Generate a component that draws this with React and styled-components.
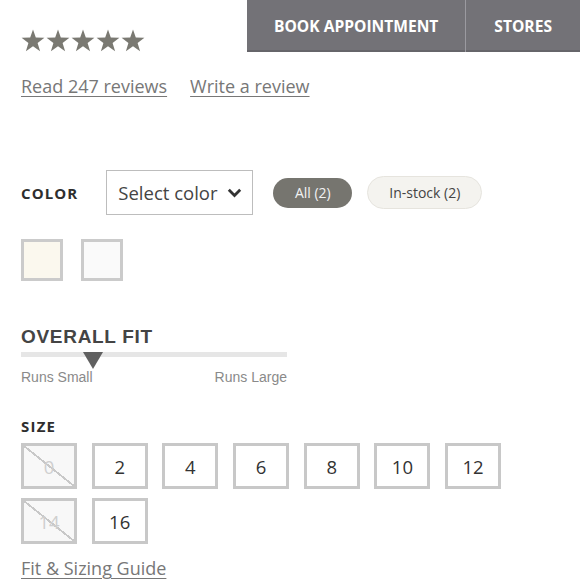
import styled, { createGlobalStyle } from 'styled-components'

const Global = createGlobalStyle`
   body {
      margin: 0;
      background: #fff;
      font-family: "Open Sans", "Liberation Sans", sans-serif;
      color: #333;
   }
`

const Page = styled.div`
   width: 580px;
   height: 580px;
   overflow: hidden;
`

const TopRow = styled.div`
   display: flex;
   justify-content: space-between;
   height: 52px;
`

const Stars = styled.div`
   display: flex;
   gap: 1px;
   padding: 29px 0 0 21px;
   svg {
      width: 24px;
      height: 23px;
      fill: #7a7972;
   }
`

const ActionBar = styled.div`
   display: flex;
   width: 333px;
   height: 52px;
   background: #737277;
   box-shadow: inset 0 -2px 0 #66656a;
`

const ActionButton = styled.div`
   display: flex;
   align-items: center;
   justify-content: center;
   width: ${p => p.$w}px;
   color: #fff;
   font-size: 15.6px;
   font-weight: 700;
   padding-bottom: 1px;
   & + & {
      border-left: 1px solid #9b9aa0;
   }
`

const Body = styled.div`
   padding: 0 21px;
`

const Links = styled.div`
   display: flex;
   gap: 23px;
   margin-top: 22px;
`

const TextLink = styled.a`
   font-size: 18px;
   line-height: 24px;
   color: #777;
   text-decoration: underline;
   text-underline-offset: 3px;
   text-decoration-thickness: 1px;
`

const ColorRow = styled.div`
   display: flex;
   align-items: center;
   margin-top: 72px;
`

const Label = styled.div`
   font-size: 15px;
   font-weight: 700;
   letter-spacing: ${p => p.$ls || 1.1}px;
   color: #2e2e2e;
`

const Select = styled.div`
   display: flex;
   align-items: center;
   gap: 9px;
   box-sizing: border-box;
   width: 147px;
   height: 45px;
   margin-left: 28px;
   padding-left: 11px;
   border: 1.5px solid #bdbdbd;
   font-size: 18.5px;
   color: #444;
   svg {
      width: 15px;
      height: 10px;
      margin-top: 1px;
   }
`

const Pill = styled.div`
   display: flex;
   align-items: center;
   justify-content: center;
   box-sizing: border-box;
   width: ${p => p.$w}px;
   height: ${p => (p.$active ? 30 : 33)}px;
   margin-left: ${p => p.$ml}px;
   border-radius: 17px;
   font-size: 14px;
   background: ${p => (p.$active ? '#76756f' : '#f4f3ef')};
   color: ${p => (p.$active ? '#f2f2f2' : '#444')};
   border: ${p => (p.$active ? 'none' : '1px solid #e6e4de')};
`

const Swatches = styled.div`
   display: flex;
   gap: 18px;
   margin-top: 24px;
`

const Swatch = styled.div`
   box-sizing: border-box;
   width: 42px;
   height: 42px;
   border: 3px solid #cbcbcb;
   background: ${p => p.$color};
`

const FitTitle = styled.div`
   margin-top: 46px;
   font-family: "Liberation Sans", Arial, sans-serif;
   font-size: 19px;
   line-height: 20px;
   font-weight: 700;
   letter-spacing: 0.7px;
   color: #444;
`

const FitScale = styled.div`
   position: relative;
   width: 266px;
   margin-top: 5px;
`

const Track = styled.div`
   height: 5px;
   background: #e6e6e6;
`

const Marker = styled.div`
   position: absolute;
   top: 0;
   left: ${p => p.$x}px;
   width: 0;
   height: 0;
   border-left: 10.5px solid transparent;
   border-right: 10.5px solid transparent;
   border-top: 17px solid #606060;
`

const FitLabels = styled.div`
   display: flex;
   justify-content: space-between;
   margin-top: 12px;
   font-family: "Liberation Sans", Arial, sans-serif;
   font-size: 14px;
   line-height: 16px;
   color: #8a8a8a;
`

const SizeLabel = styled(Label)`
   margin-top: 31px;
   line-height: 20px;
`

const SizeGrid = styled.div`
   display: grid;
   grid-template-columns: repeat(7, 56px);
   column-gap: 14.7px;
   row-gap: 9px;
   margin-top: 7px;
`

const SizeBox = styled.div`
   display: flex;
   align-items: center;
   justify-content: center;
   box-sizing: border-box;
   height: 46px;
   border: 3px solid #c8c8c8;
   font-size: 18.5px;
   color: ${p => (p.$off ? '#cfcfcf' : '#333')};
   background: ${p =>
      p.$off
         ? 'linear-gradient(to top right, #f8f8f8 calc(50% - 1px), #c8c8c8 calc(50% - 1px), #c8c8c8 calc(50% + 1px), #f8f8f8 calc(50% + 1px))'
         : '#fff'};
`

const Guide = styled(TextLink)`
   display: inline-block;
   margin-top: 12px;
`

const Star = () => (
   <svg viewBox="0 0 24 23">
      <polygon points="12,0.5 14.8,8.6 23.4,8.7 16.6,13.9 19.1,22.2 12,17.3 4.9,22.2 7.4,13.9 0.6,8.7 9.2,8.6" />
   </svg>
)

const sizes = [
   { v: '0', off: true },
   { v: '2' },
   { v: '4' },
   { v: '6' },
   { v: '8' },
   { v: '10' },
   { v: '12' },
   { v: '14', off: true },
   { v: '16' },
]

const App = () => {
   return (
      <Page>
         <Global />
         <TopRow>
            <Stars>
               {[0, 1, 2, 3, 4].map(i => <Star key={i} />)}
            </Stars>
            <ActionBar>
               <ActionButton $w={219}>BOOK APPOINTMENT</ActionButton>
               <ActionButton $w={114}>STORES</ActionButton>
            </ActionBar>
         </TopRow>
         <Body>
            <Links>
               <TextLink>Read 247 reviews</TextLink>
               <TextLink>Write a review</TextLink>
            </Links>
            <ColorRow>
               <Label>COLOR</Label>
               <Select>
                  Select color
                  <svg viewBox="0 0 15 10">
                     <polyline points="1.8,1.8 7.5,7.5 13.2,1.8" fill="none" stroke="#333" strokeWidth="2.8" />
                  </svg>
               </Select>
               <Pill $active $w={79} $ml={20}>All (2)</Pill>
               <Pill $w={115} $ml={15}>In-stock (2)</Pill>
            </ColorRow>
            <Swatches>
               <Swatch $color="#fbf8ee" />
               <Swatch $color="#fafafa" />
            </Swatches>
            <FitTitle>OVERALL FIT</FitTitle>
            <FitScale>
               <Track />
               <Marker $x={62} />
               <FitLabels>
                  <span>Runs Small</span>
                  <span>Runs Large</span>
               </FitLabels>
            </FitScale>
            <SizeLabel $ls={1.2}>SIZE</SizeLabel>
            <SizeGrid>
               {sizes.map(s => (
                  <SizeBox key={s.v} $off={s.off}>{s.v}</SizeBox>
               ))}
            </SizeGrid>
            <Guide>Fit &amp; Sizing Guide</Guide>
         </Body>
      </Page>
   )
}

export default App
